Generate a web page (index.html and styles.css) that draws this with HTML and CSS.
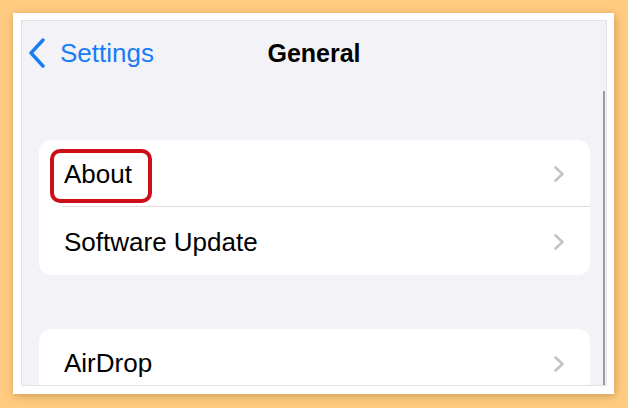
FILE: index.html
```html
<!DOCTYPE html>
<html lang="en">
<head>
    <meta charset="UTF-8">
    <meta name="viewport" content="width=device-width, initial-scale=1.0">
    <title>General</title>
    <link rel="stylesheet" href="styles.css">
</head>
<body>
    <div class="frame">
        <div class="screen">
            <div class="nav">
                <div class="back">
                    <svg class="back-icon" width="18" height="30" viewBox="0 0 18 30">
                        <path d="M15 2 L3 15 L15 28" fill="none" stroke="#1a7cf6" stroke-width="3.4" stroke-linecap="round" stroke-linejoin="round"/>
                    </svg>
                    <span>Settings</span>
                </div>
                <div class="title">General</div>
                <div></div>
            </div>

            <div class="group first">
                <div class="row">
                    <div class="row-inner divided">
                        <span>About</span>
                        <svg class="chevron" width="12" height="18" viewBox="0 0 12 18"><path d="M2.5 2.5 L9.5 9 L2.5 15.5" /></svg>
                    </div>
                    <div class="highlight"></div>
                </div>
                <div class="row">
                    <div class="row-inner">
                        <span>Software Update</span>
                        <svg class="chevron" width="12" height="18" viewBox="0 0 12 18"><path d="M2.5 2.5 L9.5 9 L2.5 15.5" /></svg>
                    </div>
                </div>
            </div>

            <div class="group">
                <div class="row">
                    <div class="row-inner">
                        <span>AirDrop</span>
                        <svg class="chevron" width="12" height="18" viewBox="0 0 12 18"><path d="M2.5 2.5 L9.5 9 L2.5 15.5" /></svg>
                    </div>
                </div>
            </div>

            <div class="scrollbar"></div>
        </div>
    </div>
</body>
</html>
```

FILE: styles.css
```css
body {
    margin: 0;
    width: 628px;
    height: 408px;
    overflow: hidden;
    background: #ffcb80;
    font-family: "Liberation Sans", Arial, sans-serif;
}

/* white photo frame */
.frame {
    margin: 13px 0 0 13px;
    width: 601px;
    height: 381px;
    box-sizing: border-box;
    padding: 7px 7px 8px 8px;
    background: #fff;
    box-shadow: 1px 2px 8px rgba(110, 70, 10, 0.35);
}

/* phone screenshot */
.screen {
    position: relative;
    height: 100%;
    box-sizing: border-box;
    border: 1px solid #e2e2e6;
    background: #f2f2f7;
    overflow: hidden;
    padding: 0 16px 0 17px;
}

.nav {
    display: grid;
    grid-template-columns: 1fr auto 1fr;
    align-items: center;
    height: 64px;
    margin: 0 -16px 0 -17px;
}

.back {
    display: flex;
    align-items: center;
    gap: 14px;
    padding-left: 6px;
    color: #1a7cf6;
    font-size: 26px;
}

.back-icon {
    display: block;
}

.title {
    font-size: 25px;
    font-weight: bold;
    color: #000;
}

/* grouped list */
.group {
    background: #fff;
    border-radius: 12px;
    margin-top: 54px;
}

.group.first {
    margin-top: 55px;
}

.row {
    position: relative;
    padding-left: 24px;
    height: 67px;
}

.row + .row {
    height: 68px;
}

.row-inner {
    height: 100%;
    box-sizing: border-box;
    display: flex;
    align-items: center;
    justify-content: space-between;
    padding: 2px 25px 0 1px;
    font-size: 26px;
    color: #000;
}

.row-inner.divided {
    border-bottom: 1px solid #dcdce0;
}

.chevron path {
    fill: none;
    stroke: #c4c4c7;
    stroke-width: 2.6;
    stroke-linecap: round;
    stroke-linejoin: round;
}

/* red annotation box */
.highlight {
    position: absolute;
    left: 11px;
    top: 9px;
    width: 102px;
    height: 54px;
    box-sizing: border-box;
    border: 4px solid #cc1018;
    border-radius: 10px;
}

.scrollbar {
    position: absolute;
    right: 1px;
    top: 70px;
    bottom: 0;
    width: 2px;
    background: #9c9ca0;
}
```
